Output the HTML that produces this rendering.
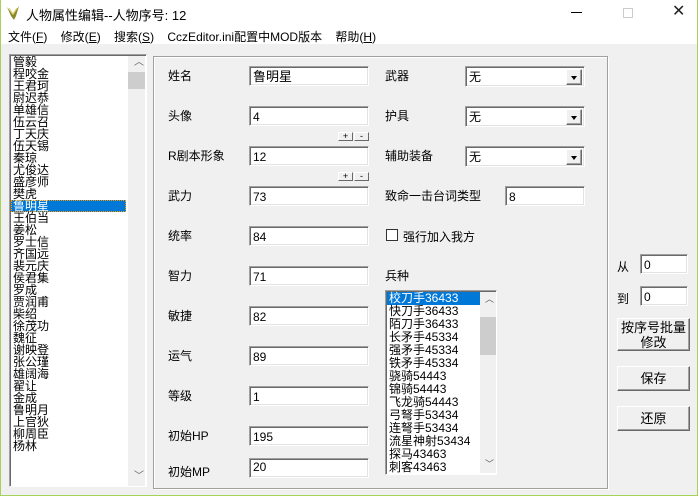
<!DOCTYPE html><html><head><meta charset="utf-8"><style>
*{box-sizing:border-box;margin:0;padding:0}
body{width:698px;height:496px;background:#f0f0f0;font-family:"Liberation Sans","Noto Sans CJK SC","WenQuanYi Zen Hei",sans-serif;font-size:12px;color:#000;position:relative;overflow:hidden}
.a{position:absolute;white-space:nowrap}
.win{position:absolute;left:0;top:0;width:698px;height:496px;border:1px solid #a6d15a;border-top:none}
.tb{position:absolute;left:1px;top:0;width:696px;height:44px;background:#fff}
.in{position:absolute;background:#fff;border:1px solid;border-color:#a0a0a0 #fff #fff #a0a0a0;box-shadow:inset 1px 1px 0 #696969,inset -1px -1px 0 #e3e3e3;padding:3px 0 0 3px;font-size:12px;line-height:14px}
.lbl{position:absolute;font-size:12px;white-space:nowrap}
.dd{position:absolute;right:2px;top:2px;width:16px;height:16px;background:#f0f0f0;border:1px solid;border-color:#fff #696969 #696969 #fff;box-shadow:inset -1px -1px 0 #a0a0a0}
.dd:after{content:"";position:absolute;left:4px;top:6px;border:3.5px solid transparent;border-top:4px solid #000}
.pm{position:absolute;width:15px;height:9px;background:#f0f0f0;border:1px solid;border-color:#fff #696969 #696969 #fff;font-size:9px;line-height:6px;text-align:center}
.btn{position:absolute;background:#f0f0f0;border:1px solid;border-color:#fff #696969 #696969 #fff;box-shadow:inset -1px -1px 0 #a0a0a0;text-align:center;font-size:13px;line-height:15px}
.li div{height:12px;line-height:12px;font-size:12px;padding-left:2px}
.bl div{height:13px;line-height:13px;font-size:12px;padding-left:2px}
</style></head><body>
<div class="win"></div>
<div class="tb"></div>
<svg class="a" style="left:5px;top:4px" width="18" height="18" viewBox="0 0 18 18"><path d="M2 3 L8 11 L14 2 L11 12 L9 16 L6 12 Z" fill="#8a8a2a"/><path d="M4 4 L8 10 L12 4" stroke="#e0d060" fill="none"/></svg>
<div class="a" style="left:26px;top:5px;font-size:13px">人物属性编辑--人物序号: 12</div>
<div class="a" style="left:571px;top:12px;width:11px;height:1px;background:#000"></div>
<div class="a" style="left:623px;top:8px;width:10px;height:10px;border:1px solid #ccc"></div>
<div class="a" style="left:672px;top:1px;font-size:16px;color:#222">✕</div>
<div class="a" style="left:8px;top:28px;font-size:12px;word-spacing:0">文件(<u>F</u>)&nbsp;&nbsp;&nbsp; 修改(<u>E</u>)&nbsp;&nbsp;&nbsp; 搜索(<u>S</u>)&nbsp;&nbsp;&nbsp; CczEditor.ini配置中MOD版本&nbsp;&nbsp;&nbsp; 帮助(<u>H</u>)</div>

<div class="a li" style="left:9px;top:54px;width:138px;height:433px;background:#fff;border:1px solid;border-color:#a0a0a0 #fff #fff #a0a0a0;box-shadow:inset 1px 1px 0 #696969;padding-top:1px;padding-left:1px;overflow:hidden">
<div>管毅</div><div>程咬金</div><div>王君珂</div><div>尉迟恭</div><div>单雄信</div><div>伍云召</div><div>丁天庆</div><div>伍天锡</div><div>秦琼</div><div>尤俊达</div><div>盛彦师</div><div>樊虎</div><div style="background:#0078d7;color:#fff;width:115px;outline:1px dotted #f90;outline-offset:-1px">鲁明星</div><div>王伯当</div><div>姜松</div><div>罗士信</div><div>齐国远</div><div>裴元庆</div><div>侯君集</div><div>罗成</div><div>贾润甫</div><div>柴绍</div><div>徐茂功</div><div>魏征</div><div>谢映登</div><div>张公瑾</div><div>雄阔海</div><div>翟让</div><div>金成</div><div>鲁明月</div><div>上官狄</div><div>柳周臣</div><div>杨林</div>
<div class="a" style="left:118px;top:1px;width:17px;height:430px;background:#f0f0f0"></div>
<div class="a" style="left:118px;top:17px;width:17px;height:17px;background:#cdcdcd"></div>
<div class="a" style="left:122px;top:2px;font-size:10px;color:#606060">︿</div>
<div class="a" style="left:122px;top:416px;font-size:10px;color:#606060">﹀</div>
</div>

<div class="a" style="left:153px;top:56px;width:455px;height:433px;border:1px solid #a0a0a0;box-shadow:inset 1px 1px 0 #fff,1px 1px 0 #fff"></div>

<div class="lbl" style="left:168px;top:67px">姓名</div><div class="in" style="left:249px;top:66px;width:120px;height:20px;font-size:13px">鲁明星</div>
<div class="lbl" style="left:168px;top:107px">头像</div><div class="in" style="left:249px;top:106px;width:120px;height:20px">4</div>
<div class="pm" style="left:338px;top:132px">+</div><div class="pm" style="left:354px;top:132px">-</div>
<div class="lbl" style="left:168px;top:147px">R剧本形象</div><div class="in" style="left:249px;top:146px;width:120px;height:20px">12</div>
<div class="pm" style="left:338px;top:172px">+</div><div class="pm" style="left:354px;top:172px">-</div>
<div class="lbl" style="left:168px;top:187px">武力</div><div class="in" style="left:249px;top:186px;width:120px;height:20px">73</div>
<div class="lbl" style="left:168px;top:227px">统率</div><div class="in" style="left:249px;top:226px;width:120px;height:20px">84</div>
<div class="lbl" style="left:168px;top:267px">智力</div><div class="in" style="left:249px;top:266px;width:120px;height:20px">71</div>
<div class="lbl" style="left:168px;top:307px">敏捷</div><div class="in" style="left:249px;top:306px;width:120px;height:20px">82</div>
<div class="lbl" style="left:168px;top:347px">运气</div><div class="in" style="left:249px;top:346px;width:120px;height:20px">89</div>
<div class="lbl" style="left:168px;top:387px">等级</div><div class="in" style="left:249px;top:386px;width:120px;height:20px">1</div>
<div class="lbl" style="left:168px;top:427px">初始HP</div><div class="in" style="left:249px;top:426px;width:120px;height:20px">195</div>
<div class="lbl" style="left:168px;top:463px">初始MP</div><div class="in" style="left:249px;top:458px;width:120px;height:20px;padding-top:1px">20</div>

<div class="lbl" style="left:385px;top:67px">武器</div><div class="in" style="left:465px;top:66px;width:120px;height:21px">无<div class="dd"></div></div>
<div class="lbl" style="left:385px;top:107px">护具</div><div class="in" style="left:465px;top:106px;width:120px;height:21px">无<div class="dd"></div></div>
<div class="lbl" style="left:385px;top:147px">辅助装备</div><div class="in" style="left:465px;top:146px;width:120px;height:21px">无<div class="dd"></div></div>
<div class="lbl" style="left:385px;top:187px">致命一击台词类型</div><div class="in" style="left:505px;top:186px;width:80px;height:20px">8</div>
<div class="a" style="left:386px;top:229px;width:12px;height:12px;background:#fff;border:1px solid #333"></div>
<div class="lbl" style="left:403px;top:228px">强行加入我方</div>
<div class="lbl" style="left:385px;top:267px">兵种</div>

<div class="a bl" style="left:385px;top:290px;width:112px;height:185px;background:#fff;border:1px solid;border-color:#a0a0a0 #fff #fff #a0a0a0;box-shadow:inset 1px 1px 0 #696969;padding:1px;overflow:hidden">
<div style="background:#0078d7;color:#fff;width:93px">校刀手36433</div><div>快刀手36433</div><div>陌刀手36433</div><div>长矛手45334</div><div>强矛手45334</div><div>铁矛手45334</div><div>骁骑54443</div><div>锦骑54443</div><div>飞龙骑54443</div><div>弓弩手53434</div><div>连弩手53434</div><div>流星神射53434</div><div>探马43463</div><div>刺客43463</div>
<div class="a" style="left:94px;top:1px;width:16px;height:181px;background:#f0f0f0"></div>
<div class="a" style="left:94px;top:26px;width:16px;height:38px;background:#cdcdcd"></div>
<div class="a" style="left:97px;top:2px;font-size:9px;color:#606060">︿</div>
<div class="a" style="left:97px;top:167px;font-size:9px;color:#606060">﹀</div>
</div>

<div class="lbl" style="left:617px;top:258px">从</div><div class="in" style="left:640px;top:254px;width:48px;height:20px">0</div>
<div class="lbl" style="left:617px;top:290px">到</div><div class="in" style="left:640px;top:286px;width:48px;height:20px">0</div>
<div class="btn" style="left:617px;top:318px;width:73px;height:33px;padding-top:1px">按序号批量<br>修改</div>
<div class="btn" style="left:617px;top:366px;width:73px;height:25px;line-height:23px">保存</div>
<div class="btn" style="left:617px;top:406px;width:73px;height:25px;line-height:23px">还原</div>
</body></html>
